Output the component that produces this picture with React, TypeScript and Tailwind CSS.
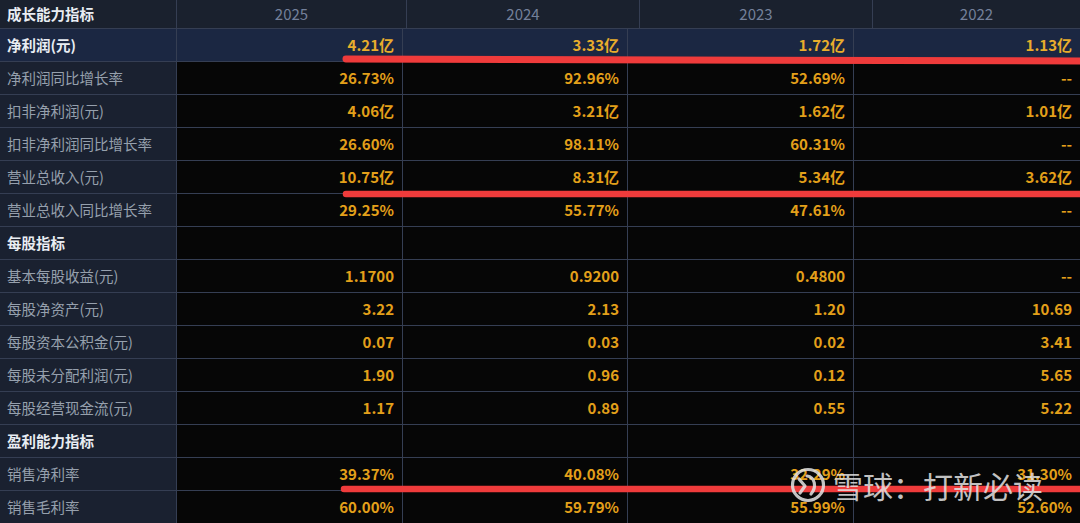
import React from 'react'

type Row = { label: string; vals?: string[]; section?: boolean; selected?: boolean }

const years = ['2025', '2024', '2023', '2022']

const rows: Row[] = [
  { label: '净利润(元)', vals: ['4.21亿', '3.33亿', '1.72亿', '1.13亿'], selected: true },
  { label: '净利润同比增长率', vals: ['26.73%', '92.96%', '52.69%', '--'] },
  { label: '扣非净利润(元)', vals: ['4.06亿', '3.21亿', '1.62亿', '1.01亿'] },
  { label: '扣非净利润同比增长率', vals: ['26.60%', '98.11%', '60.31%', '--'] },
  { label: '营业总收入(元)', vals: ['10.75亿', '8.31亿', '5.34亿', '3.62亿'] },
  { label: '营业总收入同比增长率', vals: ['29.25%', '55.77%', '47.61%', '--'] },
  { label: '每股指标', section: true },
  { label: '基本每股收益(元)', vals: ['1.1700', '0.9200', '0.4800', '--'] },
  { label: '每股净资产(元)', vals: ['3.22', '2.13', '1.20', '10.69'] },
  { label: '每股资本公积金(元)', vals: ['0.07', '0.03', '0.02', '3.41'] },
  { label: '每股未分配利润(元)', vals: ['1.90', '0.96', '0.12', '5.65'] },
  { label: '每股经营现金流(元)', vals: ['1.17', '0.89', '0.55', '5.22'] },
  { label: '盈利能力指标', section: true },
  { label: '销售净利率', vals: ['39.37%', '40.08%', '32.29%', '31.30%'] },
  { label: '销售毛利率', vals: ['60.00%', '59.79%', '55.99%', '52.60%'] },
]

function XueqiuLogo() {
  return (
    <svg width="36" height="36" viewBox="0 0 36 36" fill="none" stroke="currentColor" strokeWidth="3.2" strokeLinecap="round" strokeLinejoin="round">
      <circle cx="18" cy="18" r="15.5" />
      <path d="M9 12 L15 19 L10 26" />
      <path d="M17 9 C25 10 27 20 21 27" />
    </svg>
  )
}

export default function App() {
  return (
    <div
      className="relative w-[1080px] h-[523px] overflow-hidden bg-[#060606]"
      style={{ fontFamily: '"Noto Sans CJK SC", "Noto Sans", sans-serif' }}
    >
      {/* header */}
      <div className="grid grid-cols-[177px_230px_233px_233px_1fr] h-[29px] bg-[#1a212e] border-b border-[#353e53]">
        <div className="flex items-center pl-[7px] text-[14.5px] font-bold text-[#e9edf3] border-r border-[#353e53]">
          成长能力指标
        </div>
        {years.map((y, i) => (
          <div
            key={y}
            className={`flex items-center justify-center text-[15px] text-[#74809a] ${i < 3 ? 'border-r border-[#353e53]' : ''}`}
          >
            {y}
          </div>
        ))}
      </div>

      {/* body */}
      {rows.map((r) => (
        <div
          key={r.label}
          className={`grid grid-cols-[177px_226px_225px_226px_1fr] h-[33px] border-b border-[#353e53] ${r.selected ? 'bg-[#1b2742]' : ''}`}
        >
          <div
            className={`flex items-center pl-[7px] text-[14.5px] border-r border-[#353e53] ${
              r.selected ? 'bg-[#1b2742]' : 'bg-[#1a2130]'
            } ${r.section || r.selected ? 'font-bold text-[#e9edf3]' : 'text-[#96a0ad]'}`}
          >
            {r.label}
          </div>
          {[0, 1, 2, 3].map((i) => (
            <div
              key={i}
              className={`flex items-center justify-end pr-2 text-[15px] font-bold ${
                r.selected ? 'text-[#e8ad2c]' : 'text-[#e3a01a]'
              } ${i < 3 ? 'border-r border-[#353e53]' : ''}`}
            >
              {r.vals ? r.vals[i] : ''}
            </div>
          ))}
        </div>
      ))}

      {/* red marker strokes */}
      <svg className="absolute inset-0 pointer-events-none" width="1080" height="523">
        <path d="M346 59 L1084 61" stroke="#ef3b3b" strokeWidth="7" strokeLinecap="round" />
        <path d="M346 194 L1084 194" stroke="#ef3b3b" strokeWidth="6.5" strokeLinecap="round" />
        <path d="M344 489 L1084 489" stroke="#ef3b3b" strokeWidth="6.5" strokeLinecap="round" />
      </svg>

      {/* watermark */}
      <div className="absolute left-[790px] top-[467px] flex items-center gap-[7px] text-[rgba(228,228,228,0.85)] pointer-events-none">
        <XueqiuLogo />
        <span className="text-[30px] leading-none">雪球：打新必读</span>
      </div>
    </div>
  )
}
